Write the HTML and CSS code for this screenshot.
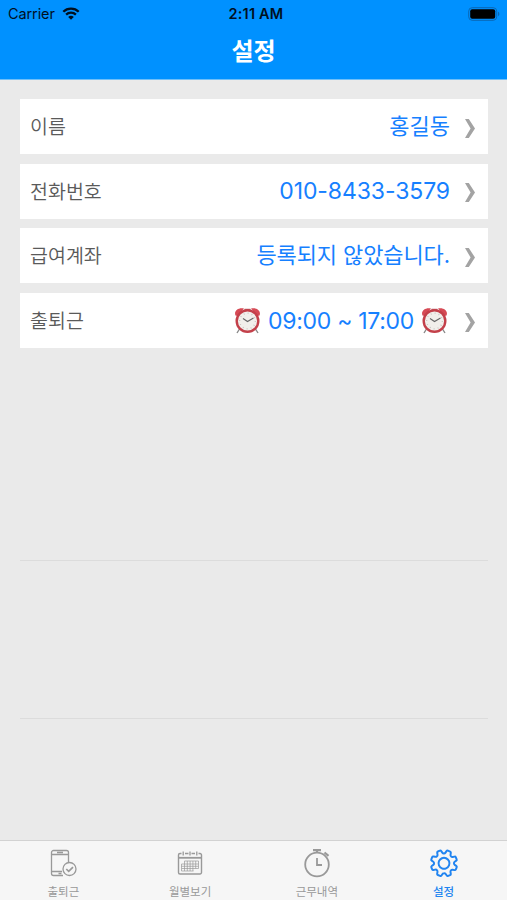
FILE: index.html
```html
<!DOCTYPE html>
<html lang="ko">
<head>
<meta charset="utf-8">
<title>설정</title>
<link rel="stylesheet" href="styles.css">
</head>
<body>
<svg class="defs" aria-hidden="true">
  <symbol id="chevron" viewBox="0 0 10 19"><path d="M0 0h3.8l6.2 9.5L3.8 19H0l5.6-9.5z"/></symbol>
  <symbol id="clock" viewBox="0 0 26 27">
    <path d="M5 22 2.500 26M21 22l2.500 4" stroke="#888" stroke-width="1.400"/>
    <path d="M1 8.500C-1 4 4 .2 9.500 1.600L3 9zM25 8.500c2-4.500-3-8.300-8.500-6.900L23 9z" fill="#d64a55"/>
    <path d="M10 2.300h6M13 2v3" stroke="#b86a70" stroke-width="1.300"/>
    <circle cx="13" cy="14" r="10.800" fill="#f1efeb" stroke="#c3404a" stroke-width="2.400"/>
    <circle cx="13" cy="14" r="7.800" fill="none" stroke="#bbb5b0" stroke-width="1.300" stroke-dasharray=".7 3.384"/>
    <path d="M8.500 11.500 13 14.500l6-3.500" fill="none" stroke="#666" stroke-width="1.100"/>
  </symbol>
</svg>
<header class="header">
  <div class="status">
    <div class="carrier">Carrier
      <svg class="wifi" viewBox="0 0 18 13"><g fill="none" stroke="#00101f" stroke-width="2.300"><path d="M1.300 4.700C5.500.5 12.500.5 16.700 4.700"/><path d="M4.100 7.600c2.700-2.600 7.100-2.600 9.800 0"/></g><path d="M6.200 9.900c1.500-1.500 4.100-1.500 5.600 0L9 12.700z" fill="#00101f"/></svg>
    </div>
    <div class="time">2:11 AM</div>
    <svg class="battery" viewBox="0 0 32 14"><rect x=".7" y=".7" width="28" height="12.600" rx="3.500" fill="none" stroke="#0967b4"/><rect x="2.200" y="2.200" width="25" height="9.600" rx="2" fill="#000"/><path d="M30 4.800c1.800.5 1.800 3.900 0 4.400z" fill="#0967b4"/></svg>
  </div>
  <h1 class="title">설정</h1>
</header>
<main class="main">
  <div class="row"><span class="label">이름</span><span class="value">홍길동</span><svg class="chevron"><use href="#chevron"/></svg></div>
  <div class="row"><span class="label">전화번호</span><span class="value digits">010-8433-3579</span><svg class="chevron"><use href="#chevron"/></svg></div>
  <div class="row"><span class="label">급여계좌</span><span class="value message">등록되지 않았습니다.</span><svg class="chevron"><use href="#chevron"/></svg></div>
  <div class="row"><span class="label">출퇴근</span><span class="value hours"><svg class="clock"><use href="#clock"/></svg><span class="range">09:00 ~ 17:00</span><svg class="clock"><use href="#clock"/></svg></span><svg class="chevron"><use href="#chevron"/></svg></div>
  <div class="blank first"></div>
  <div class="blank"></div>
</main>
<nav class="tabs">
  <div class="tab">
    <svg class="icon" viewBox="0 0 30 30"><g fill="none" stroke="currentColor" stroke-width="1.300"><path d="M15 27.500H5.500a2 2 0 0 1-2-2v-21a2 2 0 0 1 2-2h13a2 2 0 0 1 2 2V14M3.500 6.500h17M3.500 23.500H14M9 4.500h6M10.500 25.500h3"/><circle cx="21.500" cy="21" r="6.500"/><path d="m18.300 21 2.400 2.400 4.300-4.300" stroke-width="1.700"/></g></svg>
    <span>출퇴근</span>
  </div>
  <div class="tab">
    <svg class="icon" viewBox="0 0 30 30"><g fill="none" stroke="currentColor"><path d="M6.500 5.500H5a1.500 1.500 0 0 0-1.500 1.500v17.500A1.500 1.500 0 0 0 5 26h20a1.500 1.500 0 0 0 1.500-1.500V7A1.500 1.500 0 0 0 25 5.500h-1.500M10 5.500h3.500M16.500 5.500H20" stroke-width="1.400"/><path d="M8.200 3.500v4M15 3.500v4M21.800 3.500v4" stroke-width="1.300"/><path d="M3.500 9.800h23" stroke-width="1.800"/><path d="M9.500 13h14v7.500H6.500V16h17M6.500 18.300h17M9.500 13v10M12.300 13v10M15.100 13v10M17.900 13v10M20.700 13v7.500M6.500 20.500V23h12" stroke-width=".7"/></g></svg>
    <span>월별보기</span>
  </div>
  <div class="tab">
    <svg class="icon" viewBox="0 0 30 30"><g fill="none" stroke="currentColor"><circle cx="15" cy="16.500" r="11.800" stroke-width="1.800"/><path d="M11 2.200h8M15 2.200V5M22.500 4.500l4 3.300" stroke-width="2.200"/><path d="M15 10v7h5" stroke-width="1.800"/></g></svg>
    <span>근무내역</span>
  </div>
  <div class="tab active">
    <svg class="icon" viewBox="0 0 30 30"><g transform="translate(15 15.300) rotate(22.500) scale(.94) translate(-15 -16)" fill="none" stroke="currentColor" stroke-width="2.100" stroke-linejoin="round"><path d="M13.700 2h2.600q1 0 1.200 1l.4 1.900q.2 1 1.200 1.400 1 .5 1.900-.1l1.700-1.100q.8-.5 1.500.2l1.600 1.600q.7.700.2 1.500l-1.100 1.700q-.6.900-.1 1.900.4 1 1.400 1.200l1.900.4q1 .2 1 1.200v2.400q0 1-1 1.200l-1.900.4q-1 .2-1.400 1.200-.5 1 .1 1.900l1.100 1.700q.5.800-.2 1.500l-1.600 1.600q-.7.700-1.500.2l-1.700-1.100q-.9-.6-1.900-.1-1 .4-1.200 1.400l-.4 1.900q-.2 1-1.200 1h-2.600q-1 0-1.200-1l-.4-1.900q-.2-1-1.200-1.400-1-.5-1.900.1l-1.700 1.100q-.8.500-1.500-.2l-1.600-1.600q-.7-.7-.2-1.500l1.100-1.700q.6-.9.100-1.900-.4-1-1.400-1.200l-1.900-.4q-1-.2-1-1.200v-2.400q0-1 1-1.200l1.900-.4q1-.2 1.400-1.200.5-1-.1-1.900l-1.100-1.700q-.5-.8.200-1.500l1.600-1.600q.7-.7 1.500-.2l1.700 1.100q.9.600 1.900.1 1-.4 1.200-1.400l.4-1.900q.2-1 1.200-1z"/><circle cx="15" cy="16" r="5.800"/></g></svg>
    <span>설정</span>
  </div>
</nav>
</body>
</html>
```
FILE: styles.css
```css
* { box-sizing: border-box; }
body {
  margin: 0;
  height: 900px;
  display: flex;
  flex-direction: column;
  overflow: hidden;
  background: #eaeaea;
  font-family: Inter, "Noto Sans CJK KR", sans-serif;
}
.defs { position: absolute; width: 0; height: 0; }
svg { display: block; flex: none; }
.header {
  height: 80px;
  flex: none;
  background: #0091ff;
  border-bottom: 1px solid #70bff8;
}
.status {
  height: 27px;
  padding: 0 7px 0 8px;
  display: grid;
  grid-template-columns: 1fr auto 1fr;
  align-items: center;
  color: #00101f;
  font-size: 14.500px;
  line-height: 27px;
}
.carrier { display: flex; align-items: center; gap: 7px; letter-spacing: -.1px; }
.wifi { width: 18px; height: 13px; }
.time { font-weight: 600; font-size: 14.500px; padding-left: 4px; letter-spacing: .2px; }
.battery { width: 32px; height: 14px; justify-self: end; }
.title {
  margin: 0;
  text-align: center;
  color: #fff;
  font-family: "Noto Sans CJK KR", sans-serif;
  font-size: 24px;
  line-height: 45px;
  font-weight: 700;
}
.main { flex: 1; padding: 19px 19px 0 20px; }
.row {
  height: 55px;
  margin-bottom: 9.700px;
  padding: 0 13px 0 10px;
  display: flex;
  align-items: center;
  background: #fff;
}
.label {
  font-family: "Noto Sans CJK KR", sans-serif;
  font-size: 19.500px;
  font-weight: 350;
  color: #5a5a5a;
  line-height: 53px;
  padding-bottom: 2px;
}
.value {
  margin-left: auto;
  margin-right: 15px;
  color: #1680ff;
  font-size: 22px;
  line-height: 53px;
}
.message { letter-spacing: -.1px; }
.digits, .range { font-size: 23px; }
.digits { letter-spacing: -.1px; }
.hours { display: flex; align-items: center; gap: 7px; margin-right: 17px; }
.range { letter-spacing: -.3px; padding-top: 1px; }
.clock { width: 27px; height: 27px; }
.chevron { width: 10px; height: 19px; margin-top: 3px; fill: #a3a3a3; }
.blank { height: 158px; border-bottom: 1px solid #dcdcdc; }
.first { height: 203px; }
.tabs {
  height: 60px;
  flex: none;
  display: grid;
  grid-template-columns: repeat(4, 1fr);
  background: #f6f6f6;
  border-top: 1px solid #d2d2d2;
}
.tab {
  display: flex;
  flex-direction: column;
  align-items: center;
  padding-top: 7px;
  color: #999;
  font-family: "Noto Sans CJK KR", sans-serif;
  font-size: 11.500px;
  line-height: 14px;
}
.icon { width: 30px; height: 30px; margin-bottom: 6px; }
.active { color: #2184f0; font-weight: 500; }
```
